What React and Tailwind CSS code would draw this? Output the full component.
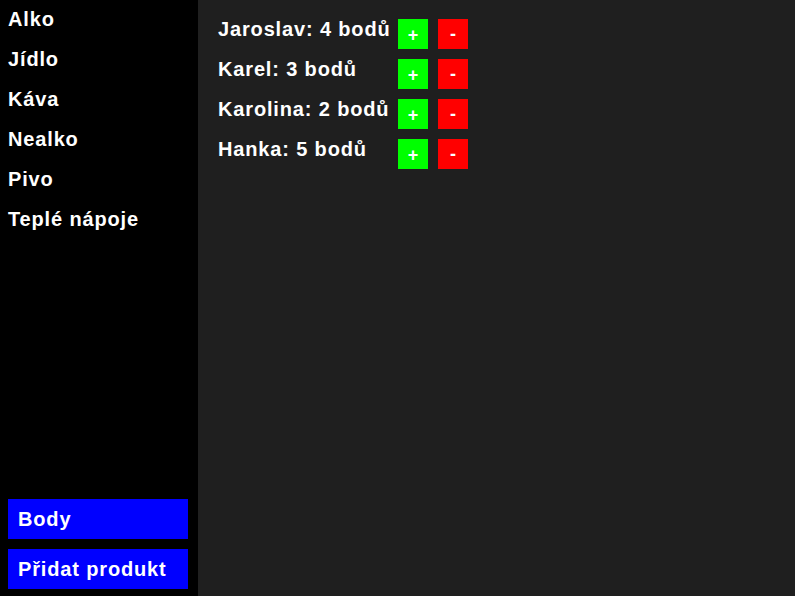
const categories = ['Alko', 'Jídlo', 'Káva', 'Nealko', 'Pivo', 'Teplé nápoje'];

const players = [
    { name: 'Jaroslav', points: 4 },
    { name: 'Karel', points: 3 },
    { name: 'Karolina', points: 2 },
    { name: 'Hanka', points: 5 },
];

const App = () => {
    return (
        <div className="flex h-[596px] w-full font-['Liberation_Sans',Arial,sans-serif] font-bold text-white">
            {/* Sidebar */}
            <aside className="flex w-[198px] shrink-0 flex-col bg-black">
                <nav className="flex flex-col">
                    {categories.map((cat) => (
                        <div key={cat} className="h-10 pl-2 pt-[8px] text-[20px] leading-[23px] tracking-[0.85px]">
                            {cat}
                        </div>
                    ))}
                </nav>
                <div className="mt-auto flex flex-col gap-[10px] pb-[7px] pl-2 pr-[10px]">
                    <button className="h-10 bg-[#0000ff] pl-[10px] pt-[1px] text-left text-[20px] leading-[23px] tracking-[0.85px]">Body</button>
                    <button className="h-10 bg-[#0000ff] pl-[10px] pt-[1px] text-left text-[20px] leading-[23px] tracking-[0.85px]">Přidat produkt</button>
                </div>
            </aside>

            {/* Points */}
            <main className="flex-1 bg-[#1f1f1f] pl-5 pt-[19px]">
                <div className="flex flex-col gap-[10px]">
                    {players.map((p) => (
                        <div key={p.name} className="flex items-start">
                            <span className="-mt-[1px] w-[180px] text-[20px] leading-[23px] tracking-[0.85px]">
                                {p.name}: {p.points} bodů
                            </span>
                            <button className="flex h-[30px] w-[30px] items-center justify-center bg-[#00ff00] pt-[2px] text-[18px] leading-none">+</button>
                            <button className="ml-[10px] flex h-[30px] w-[30px] items-center justify-center bg-[#ff0000] text-[18px] leading-none">-</button>
                        </div>
                    ))}
                </div>
            </main>
        </div>
    );
};

export default App;
